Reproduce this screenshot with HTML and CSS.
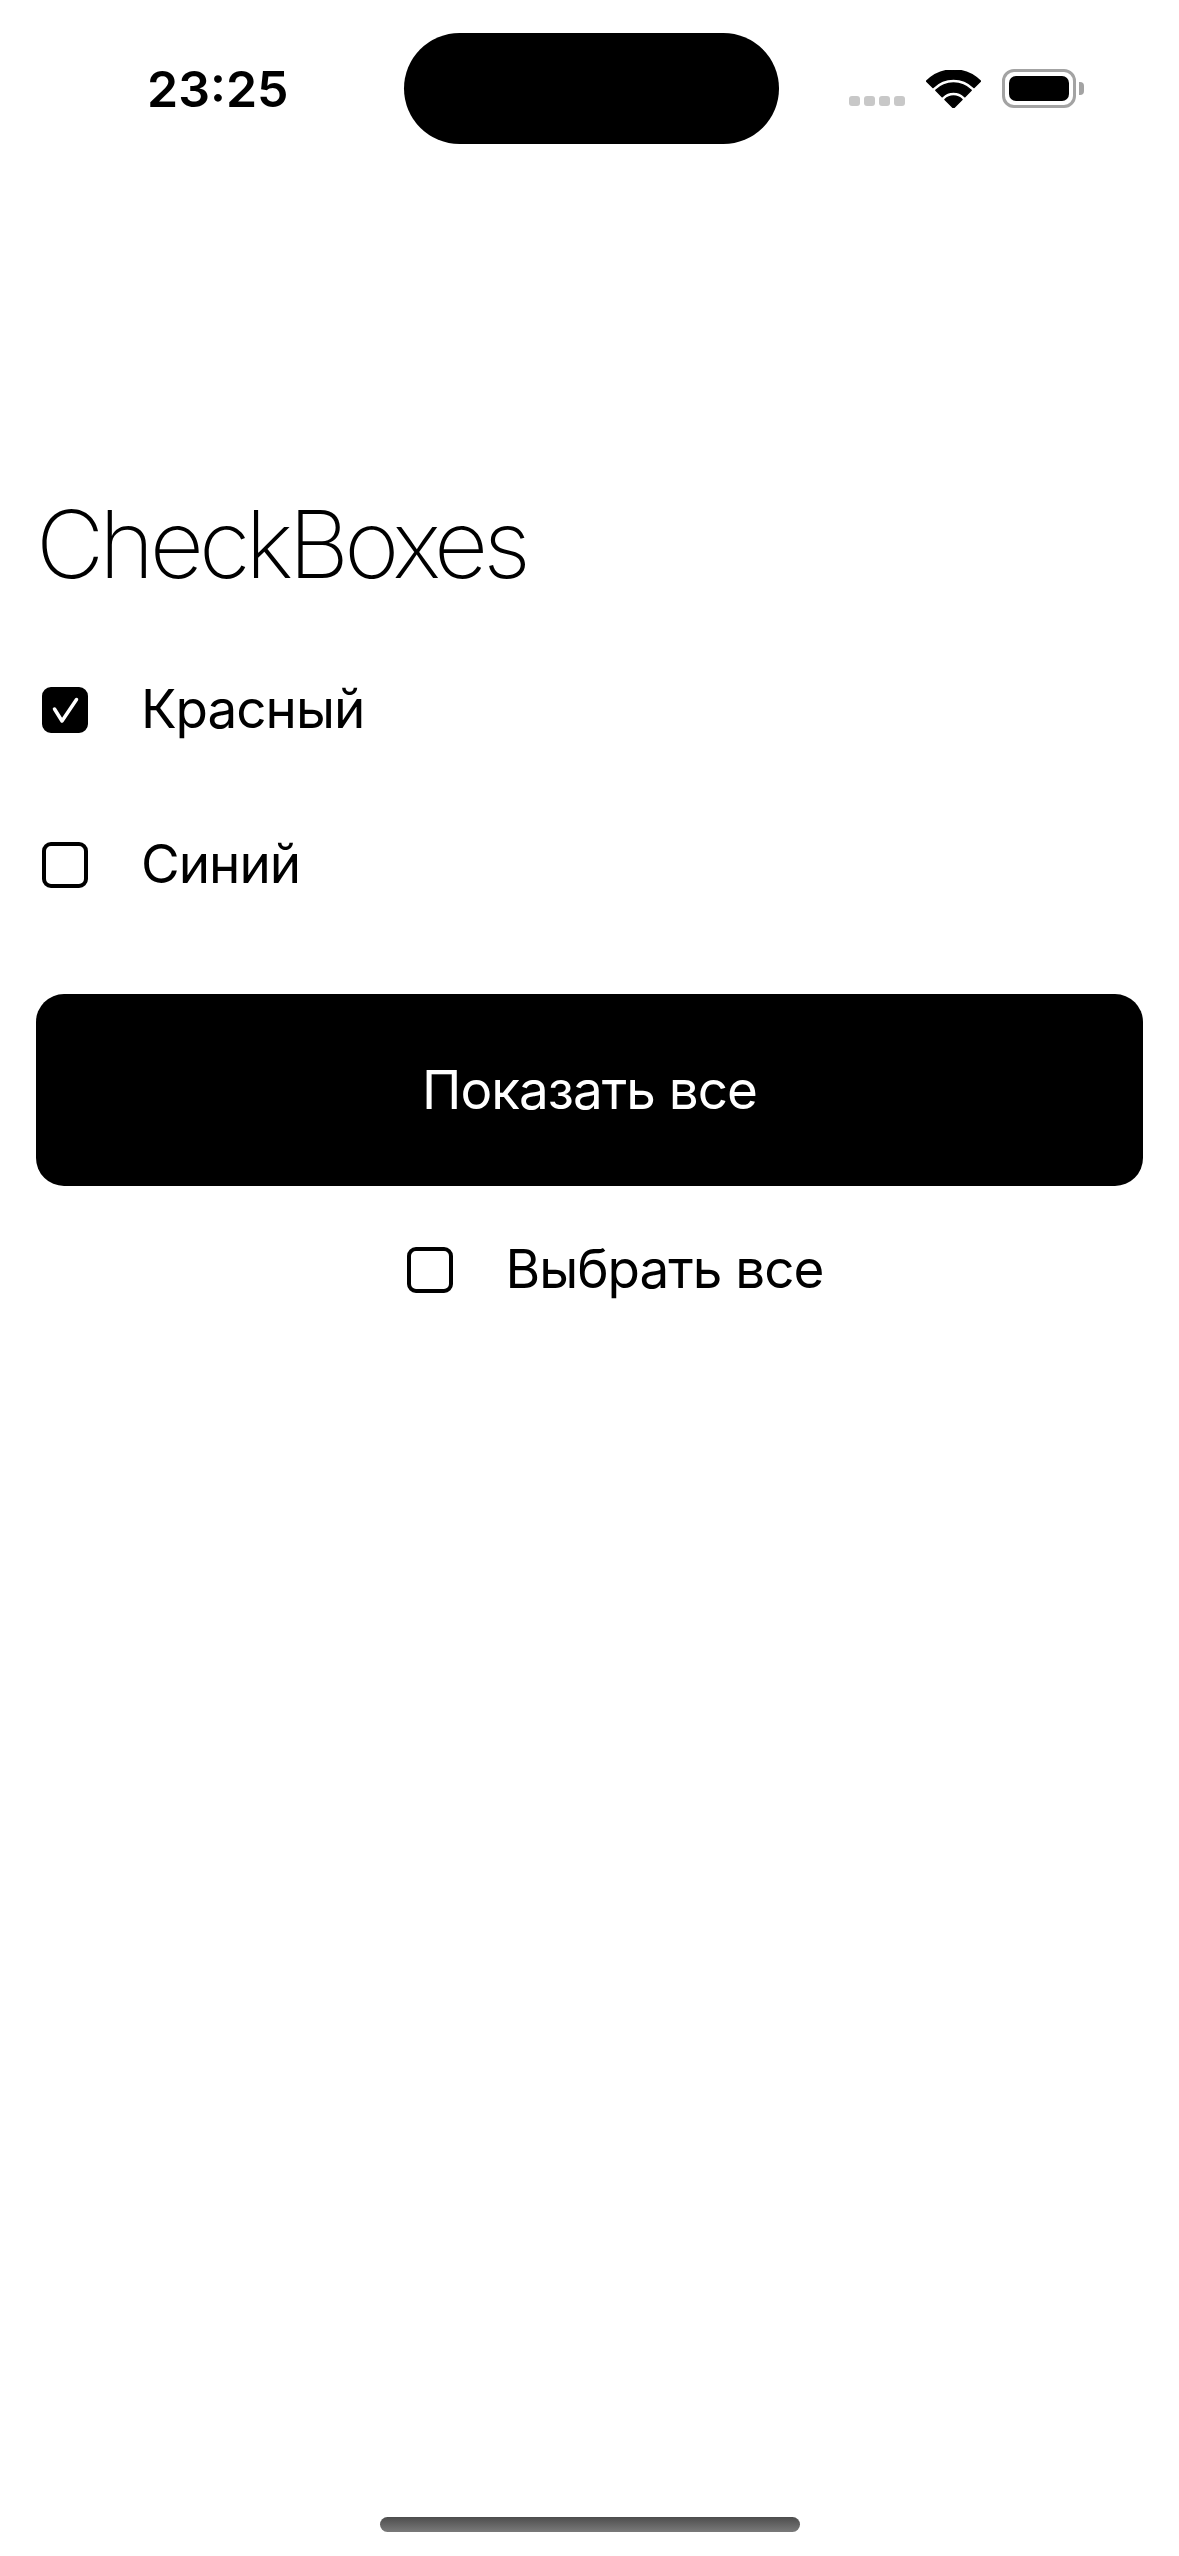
FILE: index.html
```html
<html>
  <head>
    <title>CheckBoxes</title>
    <meta content="text/html;charset=utf-8" http-equiv="Content-Type" />
    <link rel="stylesheet" href="styles.css">
  </head>
  <body>
    <div class="screen">
      <header class="status-bar">
        <span class="clock">23:25</span>
        <div class="island"></div>
        <div class="status-icons">
          <div class="signal">
            <span></span><span></span><span></span><span></span>
          </div>
          <svg class="wifi" width="55" height="38" viewBox="-1 0 55 38">
            <path d="M26.5 38 L18 29.5 A12 12 0 0 1 35 29.5 Z" />
            <path d="M8.82 20.32 A25 25 0 0 1 44.18 20.32 L37.81 26.69 A16 16 0 0 0 15.19 26.69 Z" />
            <path d="M-0.37 11.13 A38 38 0 0 1 53.37 11.13 L47 17.5 A29 29 0 0 0 6 17.5 Z" />
          </svg>
          <div class="battery">
            <div class="battery-body"><div class="battery-level"></div></div>
            <div class="battery-cap"></div>
          </div>
        </div>
      </header>

      <main class="content">
        <h1 class="title">CheckBoxes</h1>
        <ul class="options">
          <li class="option">
            <span class="box box-checked">
              <svg width="46" height="46" viewBox="0 0 46 46">
                <path d="M12.5 22 L20 34 L34.5 12.5" />
              </svg>
            </span>
            <span class="label">Красный</span>
          </li>
          <li class="option">
            <span class="box"></span>
            <span class="label">Синий</span>
          </li>
        </ul>
        <button class="show-all">Показать все</button>
        <div class="option select-all">
          <span class="box"></span>
          <span class="label">Выбрать все</span>
        </div>
      </main>

      <div class="home-indicator"></div>
    </div>
  </body>
</html>
```

FILE: styles.css
```css
html,
body {
  margin: 0;
  padding: 0;
  background-color: #ffffff;
}
body {
  font-family: 'Inter', 'Noto Sans', sans-serif;
  color: #000000;
}
.screen {
  width: 1179px;
  height: 2556px;
  display: flex;
  flex-direction: column;
  overflow: hidden;
}

/* status bar */
.status-bar {
  display: flex;
  align-items: center;
  height: 111px;
  margin-top: 33px;
}
.clock {
  box-sizing: border-box;
  width: 404px;
  padding-left: 147px;
  font-size: 50px;
  font-weight: 600;
  line-height: 1;
}
.island {
  width: 375px;
  height: 111px;
  border-radius: 56px;
  background-color: #000000;
}
.status-icons {
  display: flex;
  align-items: center;
  margin-left: 70px;
  gap: 21px;
}
.signal {
  display: flex;
  gap: 4px;
  align-self: flex-end;
  margin-bottom: 2px;
}
.signal span {
  width: 11px;
  height: 10px;
  border-radius: 3px;
  background-color: #c8c8c8;
}
.wifi {
  display: block;
  fill: #000000;
  stroke: #000000;
  stroke-width: 1.5;
  stroke-linejoin: round;
}
.battery {
  display: flex;
  align-items: center;
  gap: 3px;
}
.battery-body {
  box-sizing: border-box;
  width: 74px;
  height: 39px;
  padding: 4px;
  border: 3px solid #a3a3a3;
  border-radius: 12px;
}
.battery-level {
  height: 100%;
  border-radius: 7px;
  background-color: #000000;
}
.battery-cap {
  width: 5px;
  height: 13px;
  border-radius: 0 4px 4px 0;
  background-color: #a3a3a3;
}

/* content */
.content {
  padding: 0 36px;
}
.title {
  margin: 353px 0 0;
  font-size: 94px;
  font-weight: 150;
  line-height: 1;
  letter-spacing: -4.8px;
}
.options {
  list-style: none;
  margin: 92px 0 0;
  padding: 0;
  display: flex;
  flex-direction: column;
  gap: 102px;
}
.option {
  display: flex;
  align-items: center;
  gap: 53px;
  padding-left: 6px;
}
.box {
  box-sizing: border-box;
  width: 46px;
  height: 46px;
  border: 4px solid #000000;
  border-radius: 9px;
  position: relative;
}
.box-checked {
  background-color: #000000;
}
.box svg {
  position: absolute;
  left: -4px;
  top: -4px;
  fill: none;
  stroke: #ffffff;
  stroke-width: 3.5;
  stroke-linecap: round;
  stroke-linejoin: round;
}
.label {
  font-size: 53px;
  line-height: 1;
  letter-spacing: -1px;
}
.show-all {
  display: block;
  width: 100%;
  height: 192px;
  margin-top: 103px;
  border: none;
  border-radius: 28px;
  background-color: #000000;
  color: #ffffff;
  font-family: 'Inter', 'Noto Sans', sans-serif;
  font-size: 53px;
  letter-spacing: -1px;
  line-height: 1;
}
.select-all {
  justify-content: center;
  margin-top: 57px;
  padding-left: 51px;
}

.home-indicator {
  width: 420px;
  height: 15px;
  margin: auto auto 24px;
  border-radius: 8px;
  background: linear-gradient(#4d4d4d, #7a7a7a);
}
```
